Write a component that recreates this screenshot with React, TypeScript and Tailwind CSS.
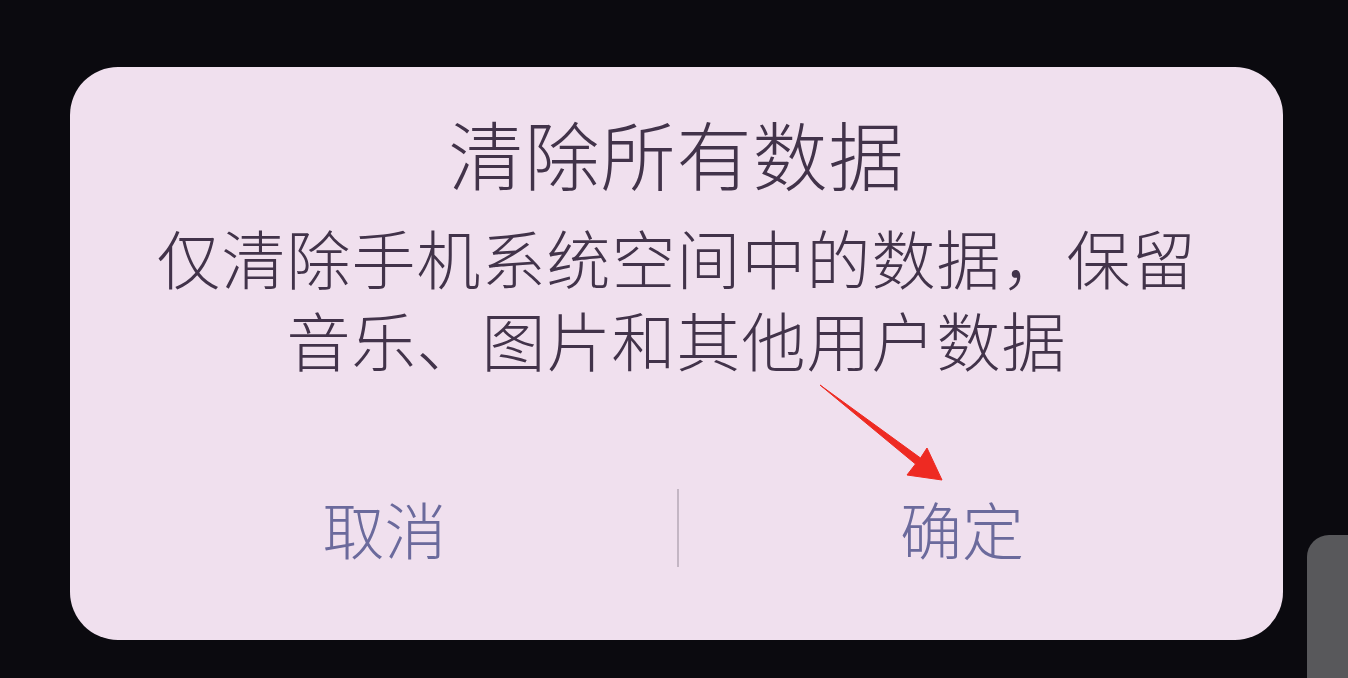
export default function App() {
  return (
    <div className="relative h-[678px] w-[1348px] overflow-hidden bg-[#0b0a0f] pt-[67px] pl-[70px]" style={{ fontFamily: '"Noto Sans CJK SC", "Noto Sans", sans-serif' }}>
      <div className="relative flex h-[573px] w-[1213px] flex-col items-center rounded-[48px] bg-[#f0e0ee] text-[#42334a]">
        <h1 className="mt-[46px] text-[75px] leading-[80px] font-light tracking-[1px]">清除所有数据</h1>
        <div className="mt-[22px] flex w-[1060px] flex-col items-center text-[64px] leading-[82px] font-light tracking-[1px]">
          <p>仅清除手机系统空间中的数据，保留</p>
          <p>音乐、图片和其他用户数据</p>
        </div>
        <div className="mt-auto mb-[72px] flex h-[80px] w-full items-center">
          <button className="w-[607px] pl-[22px] text-[62px] leading-[80px] font-light text-[#6b6a9c]">取消</button>
          <div className="h-[78px] w-[2px] bg-[#c4b6c4]" />
          <button className="flex-1 pr-[38px] text-[62px] leading-[80px] font-light text-[#6b6a9c]">确定</button>
        </div>
        <svg className="absolute left-[740px] top-[310px]" width="140" height="110" viewBox="0 0 140 110">
          <path d="M10 8 L110.5 81 L117 71 L132 103 L97 98 L105.5 87 Z" fill="#ee2a22" stroke="#ee2a22" strokeWidth="1" strokeLinejoin="round" />
        </svg>
      </div>
      <div className="absolute left-[1307px] top-[535px] h-[150px] w-[60px] rounded-tl-[22px] bg-[#58585b]" />
    </div>
  );
}
